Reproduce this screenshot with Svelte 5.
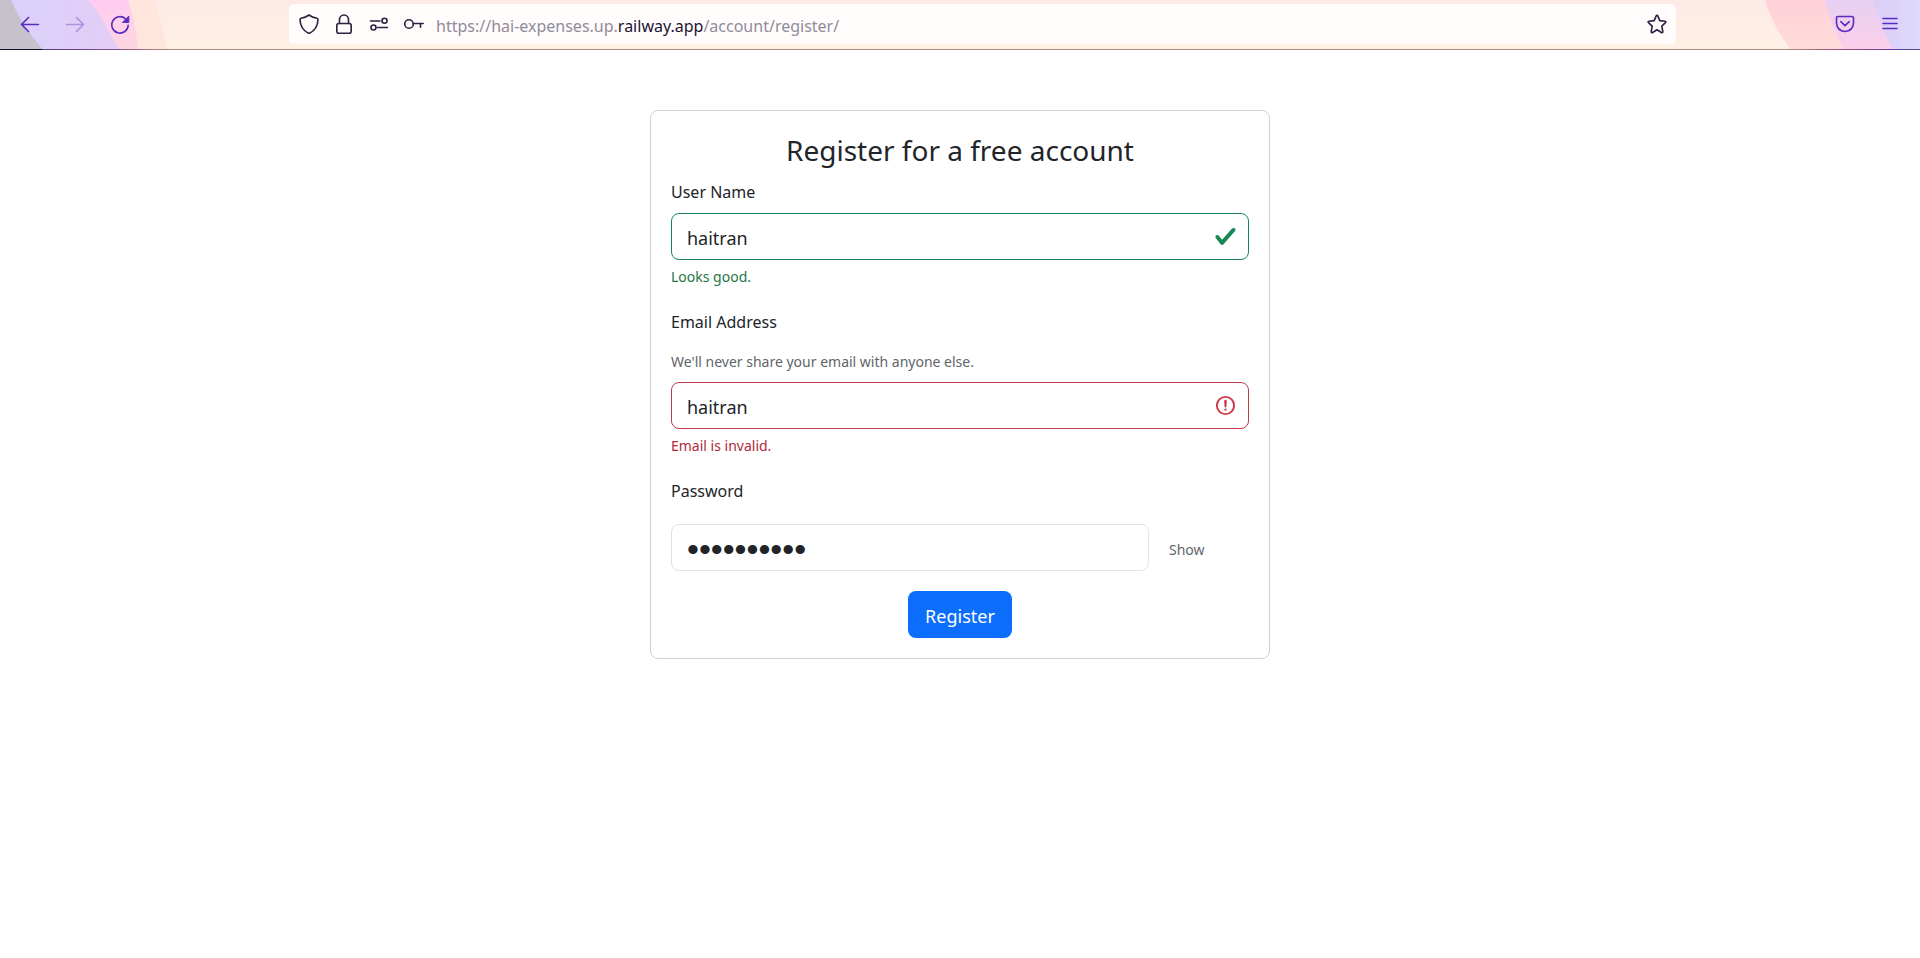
<script>
  let userName = $state('haitran');
  let email = $state('haitran');
  let password = $state('secret1234');
  let visible = $state(false);
</script>

<div class="browser">
  <svg class="art left" viewBox="0 0 170 50" aria-hidden="true">
    <path d="M0 0H152Q163 22 167 50H0Z" fill="#ffe5dc" />
    <path d="M0 0H128Q136 24 138 50H0Z" fill="url(#pinkLeft)" />
    <path d="M0 0H88Q98 11 105 24Q111 36 120 50H0Z" fill="url(#lilacLeft)" />
    <path d="M0 0H11Q21 24 43 50H0Z" fill="#c6c2cb" />
    <defs>
      <linearGradient id="pinkLeft" x2="0" y2="1"><stop stop-color="#ffcdf3" /><stop offset="1" stop-color="#ffd5de" /></linearGradient>
      <linearGradient id="lilacLeft" x2="1" y2="0"><stop stop-color="#d9d2fb" /><stop offset="1" stop-color="#e3cdf6" /></linearGradient>
    </defs>
  </svg>
  <svg class="art right" viewBox="0 0 160 50" aria-hidden="true">
    <path d="M5 0Q12 25 31 50H160V0Z" fill="url(#pinkRight)" />
    <path d="M65 0Q70 24 84 50H160V0Z" fill="url(#lilacMid)" />
    <path d="M113 0Q121 26 133 50H160V0Z" fill="url(#lilacRight)" />
    <defs>
      <linearGradient id="pinkRight" x2="0" y2="1"><stop stop-color="#ffd0da" /><stop offset="1" stop-color="#ffdcd8" /></linearGradient>
      <linearGradient id="lilacMid" x2="0" y2="1"><stop stop-color="#e6d0f2" /><stop offset="1" stop-color="#fbcfe8" /></linearGradient>
      <linearGradient id="lilacRight" x2="1" y2="0"><stop stop-color="#dccdf7" /><stop offset="1" stop-color="#ded9fd" /></linearGradient>
    </defs>
  </svg>

  <nav class="tools">
    <button class="tool" aria-label="Back"><svg viewBox="0 0 20 20"><path d="M18.500 10.500H1.500M8.500 3.500L1.500 10.500L8.500 17.500" /></svg></button>
    <button class="tool faded" aria-label="Forward"><svg viewBox="0 0 20 20"><path d="M1.500 10.500H18.500M11.500 3.500L18.500 10.500L11.500 17.500" /></svg></button>
    <button class="tool" aria-label="Reload"><svg viewBox="0 0 20 20"><path d="M18.200 11.200A8.200 8.200 0 1 1 15.500 4.800" /><path d="M18.800 2.400V8.400H12.800Z" fill="currentColor" stroke-width="1" /></svg></button>
  </nav>

  <div class="address">
    <button class="mini" aria-label="Tracking protection"><svg viewBox="0 0 20 20"><path d="M10 1C7.500 2.900 4.800 3.800 2 4.200C1.200 4.300 1 4.800 1 5.500C1.200 12 4.500 17 10 19.500C15.500 17 18.800 12 19 5.500C19 4.800 18.800 4.300 18 4.200C15.200 3.800 12.500 2.900 10 1Z" /></svg></button>
    <button class="mini" aria-label="Connection secure"><svg viewBox="0 0 20 20"><rect x="2.800" y="9.500" width="14.400" height="9.700" rx="2" /><path d="M5.500 9.500V5.500A4.500 4.500 0 0 1 14.500 5.500V9.500" /></svg></button>
    <button class="mini" aria-label="Permissions"><svg viewBox="0 0 20 20"><path d="M1.500 7H11M8.500 13.500H18.500" /><circle cx="15.500" cy="6.800" r="2.500" /><circle cx="4.500" cy="13.500" r="2.500" /></svg></button>
    <button class="mini" aria-label="Saved logins"><svg viewBox="0 0 20 20"><circle cx="5" cy="10" r="4.300" /><path d="M9.300 9.500H19.200M16.500 9.500V13.200" /></svg></button>
    <a class="url" href="#register">https://hai-expenses.up.<b>railway.app</b>/account/register/</a>
    <button class="mini" aria-label="Bookmark"><svg viewBox="0 0 20 20"><path d="M10 1.200Q10.500 1.200 10.800 1.900L12.800 6.600L18 7.200Q19.600 7.500 18.500 8.700L14.800 12.200L15.800 17.500Q15.900 19.200 14.400 18.500L10 15.800L5.600 18.500Q4.100 19.200 4.200 17.500L5.200 12.200L1.500 8.700Q0.400 7.500 2 7.200L7.200 6.600L9.200 1.900Q9.500 1.200 10 1.200Z" /></svg></button>
  </div>

  <div class="tools end">
    <button class="tool" aria-label="Pocket"><svg viewBox="0 0 20 20"><path d="M3 2.500H17Q18.500 2.500 18.500 4V9Q18 16.800 10 17.500Q2 16.800 1.500 9V4Q1.500 2.500 3 2.500ZM5.800 7.700L10 11.700L14.200 7.700" /></svg></button>
    <button class="tool" aria-label="Menu"><svg viewBox="0 0 20 20"><path d="M3 4.500H17M3 9.500H17M3 14.500H17" /></svg></button>
  </div>
</div>

<main>
  <form class="card" onsubmit={(e) => e.preventDefault()}>
    <h1>Register for a free account</h1>

    <div class="group">
      <label for="username">User Name</label>
      <div class="field">
        <input id="username" class="valid" type="text" bind:value={userName} />
        <svg class="mark" viewBox="0 0 8 8" aria-hidden="true"><path fill="#198754" d="M2.300 6.730.6 4.530c-.4-1.040.46-1.400 1.100-.8l1.100 1.400 3.400-3.800c.6-.63 1.600-.27 1.200.7l-4 4.600c-.43.5-.8.4-1.100.1z" /></svg>
      </div>
      <p class="note good">Looks good.</p>
    </div>

    <div class="group">
      <label for="email">Email Address</label>
      <p class="help">We'll never share your email with anyone else.</p>
      <div class="field">
        <input id="email" class="invalid" type="text" bind:value={email} />
        <svg class="mark" viewBox="0 0 12 12" fill="none" stroke="#cf3748" aria-hidden="true"><circle cx="6" cy="6" r="4.500" /><path stroke-linejoin="round" d="M5.800 3.600h.4L6 6.500z" /><circle cx="6" cy="8.200" r=".6" fill="#cf3748" stroke="none" /></svg>
      </div>
      <p class="note bad">Email is invalid.</p>
    </div>

    <label class="lone" for="password">Password</label>
    <div class="secret">
      <input id="password" class:masked={!visible} type={visible ? 'text' : 'password'} bind:value={password} />
      <button class="show" type="button" onclick={() => (visible = !visible)}>{visible ? 'Hide' : 'Show'}</button>
    </div>

    <button class="submit" type="submit">Register</button>
  </form>
</main>

<style>
  :global(body) {
    margin: 0;
    background: #fff;
    color: #212529;
    font-family: 'Noto Sans', 'Open Sans', sans-serif;
  }
  * { box-sizing: border-box; }
  button { border: 0; padding: 0; background: none; font: inherit; cursor: pointer; }
  h1, p { margin: 0; }

  .browser {
    position: relative;
    display: flex;
    align-items: center;
    justify-content: space-between;
    padding: 4px 18px 6px;
    background: linear-gradient(#fde9e6, #fff1e4);
  }
  .browser::after {
    content: '';
    position: absolute;
    inset: auto 0 0;
    height: 1px;
    background: linear-gradient(90deg, #17102a 42px, #5b3b82 43px, #84518c 118px, #a76a82 138px, #ad8a7d 168px, #ad8a7d calc(100% - 130px), #a94b82 calc(100% - 76px), #60409c calc(100% - 26px), #5b4b9c);
  }
  .art { position: absolute; top: 0; height: 100%; }
  .left { left: 0; }
  .right { right: 0; }
  .tools { position: relative; display: flex; align-items: center; gap: 21px; }
  .tool { display: flex; width: 24px; height: 24px; align-items: center; justify-content: center; color: #5b2bc0; }
  .tool svg, .mini svg {
    width: 20px;
    height: 20px;
    fill: none;
    stroke: currentColor;
    stroke-width: 1.6;
    stroke-linecap: round;
    stroke-linejoin: round;
  }
  .faded { color: #ae91dc; }
  .address {
    position: relative;
    flex: 1;
    display: flex;
    align-items: center;
    gap: 15px;
    height: 40px;
    margin: 0 157px;
    padding: 0 9px 0 10px;
    border-radius: 5px;
    background: #fffcfb;
  }
  .mini { display: flex; width: 20px; height: 20px; color: #2b2140; }
  .url { flex: 1; margin-left: -3px; padding-top: 3px; color: #918b9c; font-size: 16px; line-height: 24px; text-decoration: none; }
  .url b { color: #1c1433; font-weight: 400; }

  main { display: flex; justify-content: center; padding: 60px 20px; }
  .card {
    display: flex;
    flex-direction: column;
    width: 100%;
    max-width: 620px;
    padding: 20px;
    border: 1px solid #d0d1d2;
    border-radius: 8px;
  }
  h1 { margin-bottom: 10px; font-size: 28px; font-weight: 400; line-height: 38px; text-align: center; }
  .group { margin-bottom: 20px; }
  label { display: block; margin-bottom: 8px; font-size: 16px; line-height: 26px; }
  .lone { margin-bottom: 20px; }
  .field { position: relative; }
  input {
    display: block;
    width: 100%;
    height: 47px;
    padding: 2px 15px 0;
    border: 1px solid #dee2e6;
    border-radius: 8px;
    background: #fff;
    color: #212529;
    font: inherit;
    font-size: 18px;
  }
  .valid { padding-right: 48px; border-color: #198754; }
  .invalid { padding-right: 48px; border-color: #c23a4a; }
  .mark { position: absolute; top: 12px; right: 12px; width: 23px; height: 23px; }
  .note { margin-top: 5px; font-size: 14px; line-height: 24px; }
  .good { color: #1f7547; }
  .bad { color: #b02a3a; }
  .help { margin: 14px 0 8px; color: #60656a; font-size: 14px; line-height: 25px; }
  .secret { display: flex; gap: 20px; margin-bottom: 20px; }
  .secret input { flex: 1; min-width: 0; }
  .secret .masked { padding-top: 4px; font-family: 'Liberation Sans', sans-serif; font-size: 34px; }
  .show { width: 80px; padding-top: 3px; color: #60656a; font-size: 14px; text-align: left; }
  .submit {
    align-self: center;
    height: 47px;
    padding: 2px 17px 0;
    border-radius: 8px;
    background: #0d6efd;
    color: #fff;
    font-size: 18px;
  }
</style>
